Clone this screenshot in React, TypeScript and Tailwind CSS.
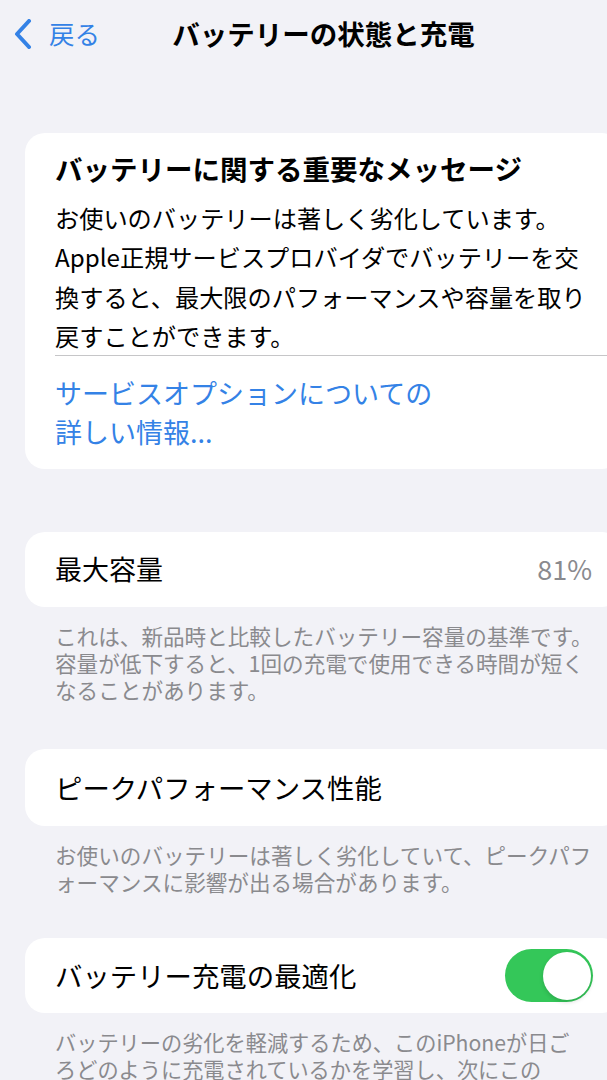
import React from "react";

const font = { fontFamily: '"Noto Sans CJK JP", "Noto Sans", sans-serif' };

function Chevron() {
  return (
    <svg width="20" height="30" viewBox="0 0 20 30" fill="none">
      <path d="M16 2 L4 15 L16 28" stroke="#3482e6" strokeWidth="4" strokeLinecap="round" strokeLinejoin="round" />
    </svg>
  );
}

export default function App() {
  return (
    <div className="w-[607px] h-[1080px] overflow-hidden bg-[#f2f2f7]" style={font}>
      <div className="w-[647px]">
        {/* Nav */}
        <div className="grid grid-cols-[1fr_auto_1fr] items-center h-[68px]">
          <div className="flex items-center pl-[13px] gap-[16px] text-[#3482e6] text-[25.5px] leading-none">
            <Chevron />
            <span className="pb-[2px]">戻る</span>
          </div>
          <div className="text-[27.5px] font-bold text-black leading-none">バッテリーの状態と充電</div>
          <div />
        </div>

        {/* Card 1 */}
        <div className="mx-[25px] mt-[65px] bg-white rounded-[20px] pt-[17px] pb-[18px]">
          <div className="px-[30px] text-[27.5px] font-bold leading-[36px] text-black whitespace-nowrap">
            バッテリーに関する重要なメッセージ
          </div>
          <div className="px-[30px] mt-[12px] text-[24.2px] leading-[39.3px] text-black whitespace-nowrap">
            お使いのバッテリーは著しく劣化しています。
            <br />
            Apple正規サービスプロバイダでバッテリーを交
            <br />
            換すると、最大限のパフォーマンスや容量を取り
            <br />
            戻すことができます。
          </div>
          <div className="ml-[30px] h-px bg-[#c6c6c8]" />
          <div className="px-[30px] pt-[17px] text-[27px] leading-[39px] text-[#3482e6] whitespace-nowrap">
            サービスオプションについての
            <br />
            詳しい情報...
          </div>
        </div>

        {/* Card 2 */}
        <div className="mx-[25px] mt-[63px] bg-white rounded-[20px] h-[75px] px-[30px] flex items-center justify-between">
          <span className="text-[27px] text-black">最大容量</span>
          <span className="text-[27px] text-[#8a8a8e]">81%</span>
        </div>
        <div className="px-[55px] pt-[15px] text-[21.6px] leading-[27px] text-[#8a8a8e] whitespace-nowrap">
          これは、新品時と比較したバッテリー容量の基準です。
          <br />
          容量が低下すると、1回の充電で使用できる時間が短く
          <br />
          なることがあります。
        </div>

        {/* Card 3 */}
        <div className="mx-[25px] mt-[46px] bg-white rounded-[20px] h-[77px] px-[30px] flex items-center">
          <span className="text-[27.4px] text-black">ピークパフォーマンス性能</span>
        </div>
        <div className="px-[55px] pt-[15px] text-[21.6px] leading-[27px] text-[#8a8a8e] whitespace-nowrap">
          お使いのバッテリーは著しく劣化していて、ピークパフ
          <br />
          ォーマンスに影響が出る場合があります。
        </div>

        {/* Card 4 */}
        <div className="mx-[25px] mt-[43px] bg-white rounded-[20px] h-[75px] pl-[30px] pr-[29px] flex items-center justify-between">
          <span className="text-[27.4px] text-black">バッテリー充電の最適化</span>
          <div className="w-[88px] h-[53px] rounded-full bg-[#34c759] flex items-center justify-end p-[2.5px]">
            <div className="w-[48px] h-[48px] rounded-full bg-white shadow-[0_2px_4px_rgba(0,0,0,0.15)]" />
          </div>
        </div>
        <div className="px-[55px] pt-[15px] text-[21.2px] leading-[27px] text-[#8a8a8e] whitespace-nowrap">
          バッテリーの劣化を軽減するため、このiPhoneが日ご
          <br />
          ろどのように充電されているかを学習し、次にこの
        </div>
      </div>
    </div>
  );
}
